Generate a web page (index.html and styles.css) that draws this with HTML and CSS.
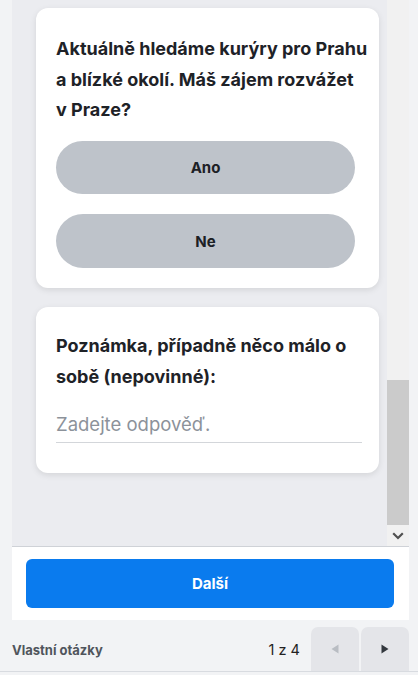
FILE: index.html
```html
<!DOCTYPE html>
<html lang="cs">
<head>
<meta charset="utf-8">
<title>Vlastní otázky</title>
<link rel="stylesheet" href="styles.css">
</head>
<body>
<div class="page">
  <div class="scroll">
    <div class="content">
      <div class="card card-choice">
        <div class="question">Aktuálně hledáme kurýry pro Prahu a&nbsp;blízké okolí. Máš zájem rozvážet v&nbsp;Praze?</div>
        <div class="choices">
          <button class="choice">Ano</button>
          <button class="choice">Ne</button>
        </div>
      </div>
      <div class="card card-note">
        <div class="question">Poznámka, případně něco málo o sobě (nepovinné):</div>
        <input class="answer" type="text" placeholder="Zadejte odpověď.">
      </div>
    </div>
    <div class="scrollbar">
      <div class="track"></div>
      <div class="thumb"></div>
      <div class="arrow">
        <svg width="12" height="8" viewBox="0 0 12 8"><path d="M1.2 1.3 L6 6 L10.8 1.3" fill="none" stroke="#505050" stroke-width="2.2"/></svg>
      </div>
    </div>
  </div>
  <div class="footer">
    <button class="next">Další</button>
  </div>
</div>
<div class="bottombar">
  <div class="title">Vlastní otázky</div>
  <div class="pager">
    <span class="count">1 z 4</span>
    <div class="navs">
      <button class="nav">
        <svg width="8" height="10" viewBox="0 0 8 10"><path d="M7.5 0.5 L7.5 9.5 L0.5 5 Z" fill="#b9bdc3"/></svg>
      </button>
      <button class="nav">
        <svg width="8" height="10" viewBox="0 0 8 10"><path d="M0.5 0.5 L0.5 9.5 L7.5 5 Z" fill="#33383e"/></svg>
      </button>
    </div>
  </div>
</div>
</body>
</html>
```

FILE: styles.css
```css
* { box-sizing: border-box; }
html, body {
  margin: 0;
  padding: 0;
  background: #f2f3f5;
  font-family: Inter, Roboto, "Liberation Sans", Arial, sans-serif;
  color: #1f2328;
}
.page {
  padding: 0 9px 0 12px;
}
.scroll {
  height: 547px;
  display: flex;
  background: #ebecf0;
  border-bottom: 1px solid #cfd2d7;
}
.content {
  flex: 1;
  padding: 8px 8px 0 24px;
  display: flex;
  flex-direction: column;
  gap: 19.5px;
}
.card {
  background: #fff;
  border-radius: 12px;
  box-shadow: 0 2px 6px rgba(0, 0, 0, 0.10);
}
.card-choice {
  padding: 26px 9px 20px 20px;
}
.question {
  font-size: 18px;
  font-weight: 700;
  line-height: 30.6px;
  color: #1e2227;
}
.choices {
  margin-top: 15px;
  display: flex;
  flex-direction: column;
  gap: 20px;
}
.choice {
  height: 53.5px;
  width: 299px;
  border: none;
  border-radius: 27px;
  background: #bec3ca;
  font-family: inherit;
  font-size: 15px;
  font-weight: 700;
  color: #1c2025;
  padding: 0;
}
.card-note {
  padding: 24px 17px 30px 20px;
}
.answer {
  display: block;
  width: 100%;
  margin-top: 13.5px;
  height: 37px;
  border: none;
  border-bottom: 1px solid #d3d6da;
  padding: 0;
  font-family: inherit;
  font-size: 18.5px;
  color: #1e2227;
  outline: none;
  background: transparent;
}
.answer::placeholder {
  color: #8c929a;
}
.scrollbar {
  width: 22px;
  background: #f1f1f1;
  display: flex;
  flex-direction: column;
}
.track { flex: 1; }
.thumb {
  height: 145px;
  background: #cbcbcb;
}
.arrow {
  height: 21px;
  display: flex;
  align-items: center;
  justify-content: center;
}
.footer {
  background: #fff;
  padding: 12px 15px 12px 14px;
}
.next {
  display: block;
  width: 100%;
  height: 49px;
  border: none;
  border-radius: 6px;
  background: #0a7bee;
  color: #fff;
  font-family: inherit;
  font-size: 15px;
  font-weight: 700;
}
.bottombar {
  display: flex;
  justify-content: space-between;
  align-items: flex-end;
  padding: 7px 9px 0 12px;
  border-bottom: 1px solid #d8dbe0;
}
.title {
  font-size: 13px;
  font-weight: 700;
  color: #50555c;
  align-self: center;
  padding-top: 1px;
}
.pager {
  display: flex;
  align-items: center;
}
.count {
  font-size: 14.5px;
  color: #222;
  margin-right: 11px;
}
.navs {
  display: flex;
  gap: 2px;
}
.nav {
  width: 48px;
  height: 44px;
  border: none;
  border-radius: 7px 7px 0 0;
  background: #e4e5e9;
  display: flex;
  align-items: center;
  justify-content: center;
  padding: 0;
}
```
